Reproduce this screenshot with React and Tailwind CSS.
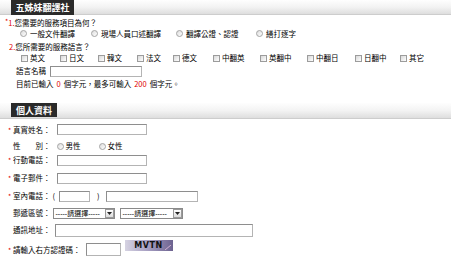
import React from "react";

const Radio = () => (
  <span className="inline-block w-[7px] h-[7px] rounded-full border border-[#a4a4a4] bg-linear-to-br from-[#dcdcdc] to-white shrink-0" />
);

const Check = () => (
  <span className="inline-block w-[7px] h-[7px] border border-[#9c9c9c] bg-linear-to-br from-[#d8d8d8] to-white shrink-0" />
);

const Input = ({ w, ml }) => (
  <span className={`inline-block h-[11px] border border-[#b4b4b4] border-t-[#8e8e8e] border-l-[#8e8e8e] bg-white ${w} ${ml}`} />
);

const Select = ({ w, ml }) => (
  <span className={`flex items-center h-[11px] border border-[#8a8a8a] bg-white ${w} ${ml}`}>
    <span className="flex-1 pl-[2px] text-[7px] whitespace-nowrap overflow-hidden font-['Liberation_Sans','Noto_Sans_CJK_TC',sans-serif]">-----請選擇-----</span>
    <span className="w-[9px] h-[9px] border border-[#9a9a9a] bg-linear-to-b from-white to-[#dcdcdc] flex items-center justify-center">
      <svg width="5" height="3" viewBox="0 0 5 3"><path d="M0 0h5L2.5 3z" fill="#222" /></svg>
    </span>
  </span>
);

const Header = ({ title, tabW, h, tabH }) => (
  <div className={`flex ${h} border-b border-[#cdcdcd] bg-linear-to-b from-[#fefefe] via-[#f3f3f3] to-[#dedede]`}>
    <div className={`ml-[11px] ${tabW} ${tabH} bg-[#2a2a2a] text-white font-bold text-[9px] flex items-center justify-center whitespace-nowrap`}>
      {title}
    </div>
  </div>
);

const Label = ({ star, children }) => (
  <span className="flex items-center pl-[8px]">
    <span className="w-[5px] text-[#e00000] text-[7px] self-start mt-[1px]">{star ? "*" : ""}</span>
    <span className="whitespace-nowrap">{children}</span>
  </span>
);

export default function App() {
  const services = [
    ["一般文件翻譯", "w-[71px]"],
    ["現場人員口述翻譯", "w-[85px]"],
    ["翻譯公證、認證", "w-[80px]"],
    ["繕打逐字", "w-[60px]"],
  ];
  const langs = [
    ["英文", "w-[39px]"],
    ["日文", "w-[38px]"],
    ["韓文", "w-[39px]"],
    ["法文", "w-[36px]"],
    ["德文", "w-[40px]"],
    ["中翻英", "w-[47px]"],
    ["英翻中", "w-[47px]"],
    ["中翻日", "w-[48px]"],
    ["日翻中", "w-[45px]"],
    ["其它", "w-[40px]"],
  ];
  return (
    <div className="w-[451px] h-[275px] overflow-hidden bg-white text-[7.5px] leading-none text-black font-['Noto_Sans_CJK_TC','Noto_Sans_CJK_SC',sans-serif]">
      <Header title="五姊妹翻譯社" tabW="w-[63px]" h="h-[15px]" tabH="h-[15px]" />

      <div className="mt-[2px] h-[12px] flex items-center pl-[5px]">
        <span className="text-[#e00000] text-[7px] self-start mt-[1px]">*</span>
        <span className="text-[#e00000]">1.</span>
        <span>您需要的服務項目為何？</span>
      </div>
      <div className="h-[9px] flex items-center pl-[20px]">
        {services.map(([t, w]) => (
          <span key={t} className={`flex items-center ${w}`}>
            <Radio />
            <span className="ml-[3px] whitespace-nowrap">{t}</span>
          </span>
        ))}
      </div>

      <div className="mt-[3px] h-[12px] flex items-center pl-[9px]">
        <span className="text-[#e00000]">2.</span>
        <span>您所需要的服務語言？</span>
      </div>
      <div className="h-[10px] flex items-center pl-[21px]">
        {langs.map(([t, w]) => (
          <span key={t} className={`flex items-center ${w}`}>
            <Check />
            <span className="ml-[2px] whitespace-nowrap">{t}</span>
          </span>
        ))}
      </div>
      <div className="mt-[2px] h-[12px] flex items-center pl-[16px]">
        <span>語言名稱</span>
        <Input w="w-[92px]" ml="ml-[4px]" />
      </div>
      <div className="mt-[1px] h-[12px] flex items-center pl-[16px] whitespace-nowrap">
        <span>目前已輸入</span>
        <span className="text-[#e00000] mx-[3px]">0</span>
        <span>個字元，最多可輸入</span>
        <span className="text-[#e00000] mx-[3px]">200</span>
        <span>個字元。</span>
      </div>

      <div className="mt-[13px]">
        <Header title="個人資料" tabW="w-[46px]" h="h-[16px]" tabH="h-[14px]" />
      </div>

      <div className="mt-[4px] h-[13px] flex items-center">
        <Label star>真實姓名：</Label>
        <Input w="w-[90px]" ml="ml-[6px]" />
      </div>
      <div className="mt-[4px] h-[12px] flex items-center">
        <Label>性　　別：</Label>
        <span className="ml-[6px] flex items-center w-[42px]">
          <Radio />
          <span className="ml-[2px]">男性</span>
        </span>
        <span className="flex items-center">
          <Radio />
          <span className="ml-[2px]">女性</span>
        </span>
      </div>
      <div className="mt-[2px] h-[12px] flex items-center">
        <Label star>行動電話：</Label>
        <Input w="w-[90px]" ml="ml-[6px]" />
      </div>
      <div className="mt-[6px] h-[12px] flex items-center">
        <Label star>電子郵件：</Label>
        <Input w="w-[90px]" ml="ml-[6px]" />
      </div>
      <div className="mt-[6px] h-[12px] flex items-center">
        <Label star>室內電話：</Label>
        <span className="ml-[2px]">(</span>
        <Input w="w-[31px]" ml="ml-[4px]" />
        <span className="ml-[7px]">)</span>
        <Input w="w-[92px]" ml="ml-[6px]" />
      </div>
      <div className="mt-[5px] h-[12px] flex items-center">
        <Label>郵遞區號：</Label>
        <Select w="w-[62px]" ml="ml-[2px]" />
        <Select w="w-[63px]" ml="ml-[5px]" />
      </div>
      <div className="mt-[4px] h-[14px] flex items-center">
        <Label>通訊地址：</Label>
        <span className="inline-block h-[13px] w-[198px] ml-[4px] border border-[#b4b4b4] border-t-[#8e8e8e] border-l-[#8e8e8e] bg-white" />
      </div>
      <div className="mt-[5px] h-[15px] flex items-center">
        <Label star>請輸入右方認證碼：</Label>
        <span className="inline-block h-[13px] w-[35px] ml-[5px] border border-[#b4b4b4] border-t-[#8e8e8e] border-l-[#8e8e8e] bg-white" />
        <span className="relative ml-[4px] mb-[8px] w-[48px] h-[11px] bg-linear-to-r from-[#d6d3e2] via-[#a49cc0] to-[#6d6390] flex items-center justify-center">
          <span className="font-bold text-[8px] text-[#111] tracking-[0.6px] font-['DejaVu_Sans',sans-serif]">MVTN</span>
          <svg className="absolute right-[2px] bottom-[1px]" width="6" height="5" viewBox="0 0 6 5">
            <path d="M0 5L6 0" stroke="#e8c0e0" strokeWidth="0.8" />
          </svg>
        </span>
      </div>
    </div>
  );
}
